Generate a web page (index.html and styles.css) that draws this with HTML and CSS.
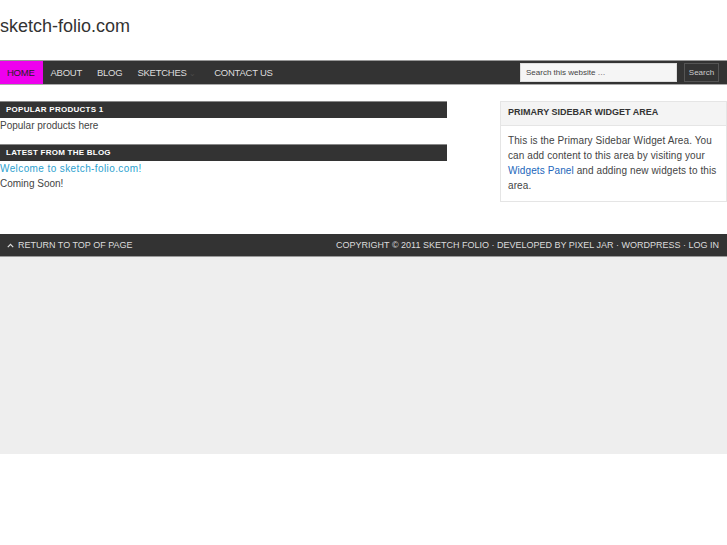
FILE: index.html
```html
<!DOCTYPE html>
<html>
<head>
<meta charset="utf-8">
<link rel="stylesheet" href="styles.css">
</head>
<body>
<div class="header">
  <div class="site-title">sketch-folio.com</div>
</div>
<div class="nav">
  <ul class="menu">
    <li class="current">HOME</li>
    <li>ABOUT</li>
    <li>BLOG</li>
    <li class="has-sub">SKETCHES <span class="arrow">&#8964;</span></li>
    <li>CONTACT US</li>
  </ul>
  <form class="search">
    <input class="search-input" type="text" value="Search this website …">
    <button class="search-btn" type="button">Search</button>
  </form>
</div>
<div class="wrap">
  <div class="content">
    <div class="widget">
      <h4 class="widget-title">POPULAR PRODUCTS 1</h4>
      <p class="text">Popular products here</p>
    </div>
    <div class="widget">
      <h4 class="widget-title">LATEST FROM THE BLOG</h4>
      <a class="post-link" href="#">Welcome to sketch-folio.com!</a>
      <p class="text">Coming Soon!</p>
    </div>
  </div>
  <div class="sidebar">
    <h4 class="side-title">PRIMARY SIDEBAR WIDGET AREA</h4>
    <p class="side-text">This is the Primary Sidebar Widget Area. You can add content to this area by visiting your <a href="#">Widgets Panel</a> and adding new widgets to this area.</p>
  </div>
</div>
<div class="footer">
  <div class="footer-left"><svg class="caret" width="7" height="5" viewBox="0 0 7 5"><path d="M0.8 4.2 L3.5 1.3 L6.2 4.2" fill="none" stroke="#ddd" stroke-width="1.2"/></svg>RETURN TO TOP OF PAGE</div>
  <div class="footer-right">COPYRIGHT © 2011 SKETCH FOLIO · DEVELOPED BY PIXEL JAR · WORDPRESS · LOG IN</div>
</div>
<div class="below"></div>
</body>
</html>
```
FILE: styles.css
```css
* { box-sizing: border-box; }
html, body { margin: 0; padding: 0; background: #fff; }
body { font-family: "Liberation Sans", Arial, sans-serif; color: #333; font-size: 10px; }

.header { height: 60px; padding-top: 15px; }
.site-title { font-size: 18px; line-height: 22px; color: #333; }

.nav {
  display: flex; justify-content: space-between; align-items: center;
  height: 25px; background: #333;
  border-top: 1px solid #999; border-bottom: 1px solid #aaa;
}
.menu { list-style: none; margin: 0; padding: 0; display: flex; height: 100%; }
.menu li { color: #ddd; padding: 0 7.5px; line-height: 23px; font-size: 9.5px; letter-spacing: -0.25px; }
.menu li.current { background: #ee00ee; color: #222; width: 43px; padding-left: 7px; }
.menu li.has-sub { padding-right: 11px; }
.arrow { color: #4a4a4a; font-size: 8px; }
.search { display: flex; align-items: center; gap: 7px; padding-right: 8px; }
.search-input {
  width: 157px; height: 19px; border: 1px solid #ddd; background: #f5f5f5;
  font-family: inherit; font-size: 8px; color: #444; padding: 0 5px;
}
.search-btn {
  height: 19px; width: 35px; background: #333; border: 1px solid #555; color: #ccc;
  font-family: inherit; font-size: 8px; padding: 0;
}

.wrap { display: flex; justify-content: space-between; padding-top: 16px; min-height: 149px; }
.content { width: 447px; }
.widget { margin-bottom: 10px; }
.widget-title {
  margin: 0; background: #333; color: #fff; font-size: 8px; font-weight: bold; letter-spacing: 0.25px;
  height: 17px; line-height: 16px; padding-left: 6px; border-top: 1px solid #888;
}
.text { margin: 0; line-height: 16px; color: #444; }
.post-link { display: block; color: #2b9fcf; text-decoration: none; line-height: 15px; font-size: 10px; letter-spacing: 0.4px; }
.sidebar { width: 227px; border: 1px solid #e5e5e5; height: 101px; }
.side-title {
  margin: 0; background: #f4f4f4; border-bottom: 1px solid #e5e5e5;
  font-size: 9px; font-weight: bold; color: #333; height: 24px; line-height: 21px; padding-left: 7px;
}
.side-text { margin: 0; padding: 7px 8px 0 7px; line-height: 15px; color: #444; font-size: 10px; letter-spacing: 0.1px; }
.side-text a { color: #2266bb; text-decoration: none; }

.footer {
  display: flex; justify-content: space-between; align-items: center;
  height: 23px; background: #333; color: #ddd; font-size: 9px;
  border-bottom: 1px solid #999; padding: 0 8px 0 7px;
}
.footer-left { display: flex; align-items: center; }
.caret { margin-right: 4px; }
.below { height: 197px; background: #eee; }
```
